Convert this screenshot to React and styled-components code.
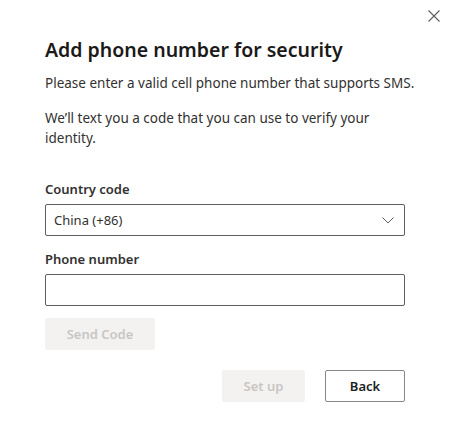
import styled, { createGlobalStyle } from "styled-components";

const GlobalStyle = createGlobalStyle`
  html, body {
    margin: 0;
    padding: 0;
    background: #ffffff;
  }
  body {
    font-family: "Noto Sans", "Open Sans", sans-serif;
    color: #323130;
  }
`;

const Dialog = styled.div`
  position: relative;
  width: 450px;
  height: 438px;
  box-sizing: border-box;
  padding: 36px 45px 0 45px;
  background: #ffffff;
`;

const CloseButton = styled.button`
  position: absolute;
  top: 8px;
  right: 4px;
  width: 24px;
  height: 16px;
  padding: 0;
  border: none;
  background: transparent;
  display: flex;
  align-items: center;
  justify-content: center;
`;

const Title = styled.h1`
  margin: 0;
  font-size: 19.5px;
  line-height: 28px;
  font-weight: 600;
  color: #1b1a19;
`;

const Text = styled.p`
  margin: ${(p) => p.$top || 0}px -14px 0 0;
  font-size: 13.5px;
  line-height: 20px;
  color: #323130;
`;

const Field = styled.div`
  display: flex;
  flex-direction: column;
  gap: 5px;
  margin-top: ${(p) => p.$top || 0}px;
`;

const Label = styled.label`
  font-size: 13px;
  line-height: 20px;
  font-weight: 600;
  color: #323130;
`;

const SelectBox = styled.div`
  height: 32px;
  box-sizing: border-box;
  border: 1px solid #605e5c;
  border-radius: 2px;
  display: flex;
  align-items: center;
  justify-content: space-between;
  padding: 0 10px 0 8px;
  font-size: 13px;
  color: #323130;
`;

const TextInput = styled.input`
  height: 32px;
  box-sizing: border-box;
  border: 1px solid #605e5c;
  border-radius: 2px;
  padding: 0 8px;
  font-family: inherit;
  font-size: 13px;
  outline: none;
`;

const Button = styled.button`
  height: 32px;
  width: ${(p) => p.$width}px;
  box-sizing: border-box;
  border-radius: 2px;
  font-family: inherit;
  font-size: 13px;
  font-weight: 600;
  padding: 0;
  border: 1px solid ${(p) => (p.disabled ? "#f3f2f1" : "#8a8886")};
  background: ${(p) => (p.disabled ? "#f3f2f1" : "#ffffff")};
  color: ${(p) => (p.disabled ? "#c8c6c4" : "#201f1e")};
`;

const SendRow = styled.div`
  margin-top: 12px;
`;

const Footer = styled.div`
  margin-top: 20px;
  display: flex;
  justify-content: flex-end;
  gap: 20px;
`;

const CloseIcon = () => (
  <svg width="12" height="12" viewBox="0 0 12 12">
    <path d="M0.5 0.5 L11.5 11.5 M11.5 0.5 L0.5 11.5" stroke="#605e5c" strokeWidth="1.1" fill="none" />
  </svg>
);

const ChevronIcon = () => (
  <svg width="12" height="7" viewBox="0 0 12 7">
    <path d="M0.5 0.5 L6 6 L11.5 0.5" stroke="#605e5c" strokeWidth="1" fill="none" />
  </svg>
);

const App = () => {
  return (
    <>
      <GlobalStyle />
      <Dialog>
        <CloseButton aria-label="Close">
          <CloseIcon />
        </CloseButton>
        <Title>Add phone number for security</Title>
        <Text $top={9}>Please enter a valid cell phone number that supports SMS.</Text>
        <Text $top={15}>We’ll text you a code that you can use to verify your identity.</Text>

        <Field $top={31}>
          <Label>Country code</Label>
          <SelectBox>
            <span>China (+86)</span>
            <ChevronIcon />
          </SelectBox>
        </Field>

        <Field $top={13}>
          <Label>Phone number</Label>
          <TextInput type="tel" />
        </Field>

        <SendRow>
          <Button disabled $width={110}>Send Code</Button>
        </SendRow>

        <Footer>
          <Button disabled $width={83}>Set up</Button>
          <Button $width={80}>Back</Button>
        </Footer>
      </Dialog>
    </>
  );
};

export default App;
